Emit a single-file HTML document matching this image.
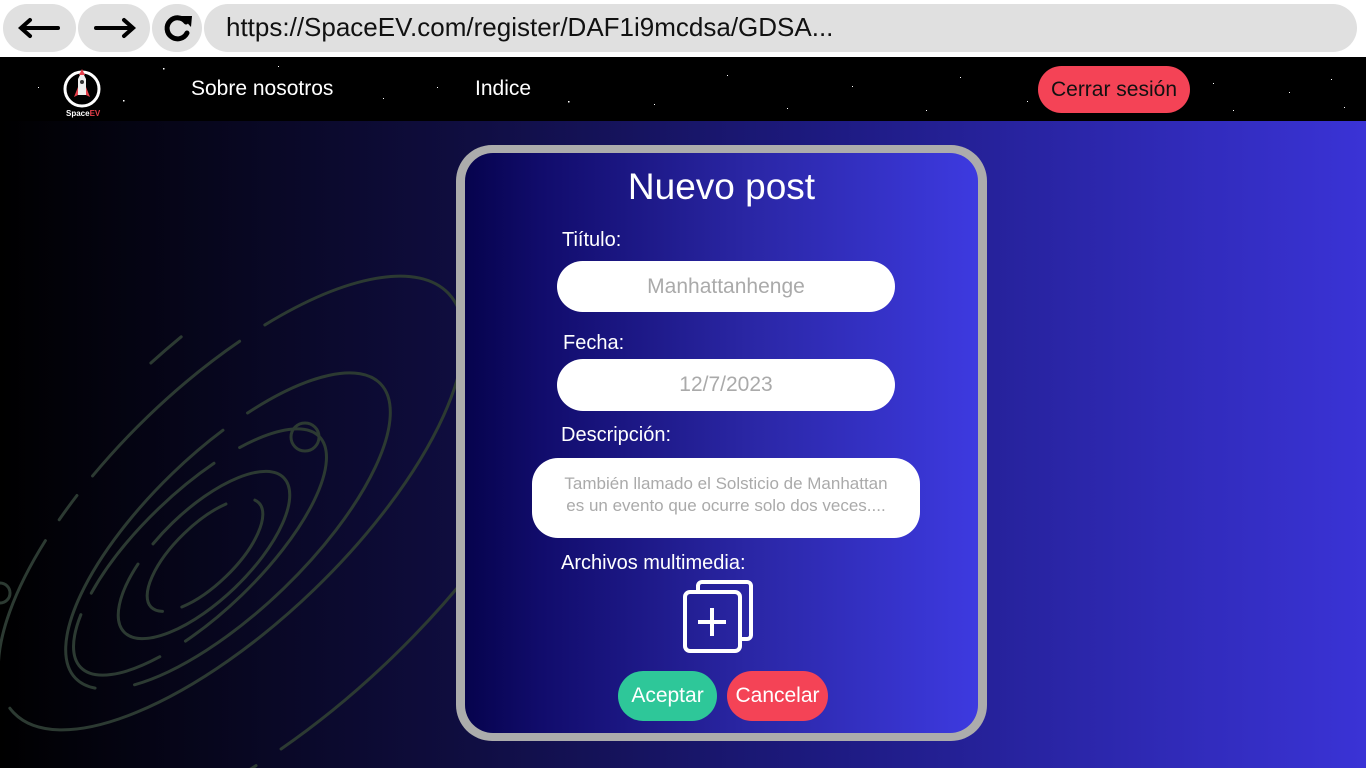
<!DOCTYPE html>
<html><head><meta charset="utf-8"><style>
*{margin:0;padding:0;box-sizing:border-box}
html,body{width:1366px;height:768px;overflow:hidden}
body{font-family:"Liberation Sans","DejaVu Sans",sans-serif;background:#fff;position:relative}
.pill{position:absolute;background:#e0e0e0;border-radius:26px;top:4px;height:48px}
.nav{position:absolute;left:0;top:57px;width:1366px;height:64px;background:#000}
.main{position:absolute;left:0;top:121px;width:1366px;height:647px;background:linear-gradient(90deg,#000 0%,#0f0d3e 33%,#1d1a80 60%,#3a33d6 100%)}
.card{position:absolute;left:456px;top:145px;width:531px;height:596px;background:#acacac;border-radius:36px}
.inner{position:absolute;left:9px;top:8px;width:513px;height:580px;border-radius:28px;background:linear-gradient(90deg,#06034d 0%,#110c6c 15%,#2a26a4 55%,#3d3ae0 100%)}
.abs{position:absolute;white-space:nowrap}
.lbl{position:absolute;color:#fff;font-size:20px;white-space:nowrap}
.inp{position:absolute;background:#fff;border-radius:26px;color:#aaa;text-align:center;white-space:nowrap}
.btn{position:absolute;border-radius:26px;color:#fff;font-size:21px;text-align:center;line-height:50px;height:50px;top:671px}
</style></head><body>
<div class="pill" style="left:3px;width:73px"></div>
<div class="pill" style="left:78px;width:72px"></div>
<div class="pill" style="left:152px;width:50px"></div>
<div class="pill" style="left:204px;width:1153px"></div>
<svg class="abs" style="left:0;top:0" width="210" height="56">
<g stroke="#000" stroke-width="4" fill="none" stroke-linecap="round">
<line x1="22" y1="28" x2="58" y2="28"/><polyline points="30,20 21,28 30,36"/>
<line x1="96" y1="28" x2="132" y2="28"/><polyline points="124,20 133,28 124,36"/>
<path d="M186 22 A10.5 10.5 0 1 0 187 33" stroke-width="5"/>
</g><polygon points="181,16 192,16 191,27" fill="#000"/></svg>
<div class="abs" style="left:226px;top:12px;font-size:26px;color:#111">https://SpaceEV.com/register/DAF1i9mcdsa/GDSA...</div>

<div class="nav">
<svg width="1366" height="64" style="position:absolute;left:0;top:0">
<g fill="#fff"><rect x="38" y="30" width="1" height="1"/><rect x="163" y="11" width="1.5" height="1.5"/><rect x="123" y="43" width="1.5" height="1.5"/><rect x="278" y="9" width="1" height="1"/><rect x="383" y="41" width="1" height="1"/><rect x="437" y="30" width="1" height="1"/><rect x="568" y="44" width="1.5" height="1.5"/><rect x="654" y="47" width="1" height="1"/><rect x="727" y="18" width="1" height="1"/><rect x="787" y="51" width="1" height="1"/><rect x="852" y="29" width="1" height="1"/><rect x="926" y="53" width="1" height="1"/><rect x="1027" y="44" width="1" height="1"/><rect x="1213" y="26" width="1" height="1"/><rect x="1233" y="53" width="1" height="1"/><rect x="1289" y="35" width="1" height="1"/><rect x="1331" y="22" width="1" height="1"/><rect x="1344" y="50" width="1" height="1"/><rect x="960" y="20" width="1" height="1"/></g>
<circle cx="82" cy="32" r="17" fill="#000" stroke="#fff" stroke-width="3"/>
<path d="M82 14 L86 22 L86 38 L78 38 L78 22 Z" fill="#eee"/>
<path d="M82 12 L85 18 L79 18 Z" fill="#e8404c"/>
<path d="M78 30 L74 40 L78 38 Z M86 30 L90 40 L86 38 Z" fill="#e8404c"/>
<circle cx="82" cy="25" r="2" fill="#333"/>
<text x="66" y="59" font-size="8" font-weight="bold" fill="#fff" font-family="Liberation Sans">Space<tspan fill="#e8404c">EV</tspan></text>
</svg>
<div class="abs" style="left:191px;top:20px;color:#fff;font-size:21px">Sobre nosotros</div>
<div class="abs" style="left:475px;top:20px;color:#fff;font-size:21px">Indice</div>
<div class="abs" style="left:1038px;top:9px;width:152px;height:47px;border-radius:24px;background:#f44356;color:#111;font-size:21px;text-align:center;line-height:47px">Cerrar sesión</div>
</div>

<div class="main"></div>
<svg class="abs" style="left:0;top:121px" width="470" height="647">
<g fill="none" stroke="#2c3a32" stroke-width="3" stroke-linecap="round">
<ellipse cx="205" cy="434" rx="75" ry="30" transform="rotate(-44 205 434)" stroke-dasharray="140 20 150 30"/>
<ellipse cx="204" cy="434" rx="111" ry="45" transform="rotate(-44 204 434)" stroke-dasharray="330 25 200 25"/>
<ellipse cx="200" cy="431" rx="166" ry="60" transform="rotate(-44 200 431)" stroke-dasharray="260 30 140 24 180 30 140 40"/>
<ellipse cx="228" cy="410" rx="212" ry="80" transform="rotate(-44 228 410)" stroke-dasharray="420 40 330 30 240 40"/>
<ellipse cx="231" cy="382" rx="302" ry="120" transform="rotate(-44 231 382)" stroke-dasharray="700 40 140 25 30 25 200 30 500"/>
<ellipse cx="260" cy="400" rx="420" ry="190" transform="rotate(-44 260 400)" stroke-dasharray="250 40 350 30 600"/>
</g>
<circle cx="305" cy="316" r="14" fill="none" stroke="#2c3a32" stroke-width="3"/>
<circle cx="0" cy="472" r="10" fill="none" stroke="#2c3a32" stroke-width="3"/>
</svg>

<div class="card"><div class="inner"></div></div>
<div class="abs" style="left:456px;width:531px;top:166px;text-align:center;color:#fff;font-size:37px">Nuevo post</div>
<div class="lbl" style="left:562px;top:229px">Tiítulo:</div>
<div class="inp" style="left:557px;top:261px;width:338px;height:51px;line-height:51px;font-size:21px">Manhattanhenge</div>
<div class="lbl" style="left:563px;top:332px">Fecha:</div>
<div class="inp" style="left:557px;top:359px;width:338px;height:52px;line-height:52px;font-size:21px">12/7/2023</div>
<div class="lbl" style="left:561px;top:424px">Descripción:</div>
<div class="inp" style="left:532px;top:458px;width:388px;height:80px;font-size:17px;line-height:22px;padding-top:15px">También llamado el Solsticio de Manhattan<br>es un evento que ocurre solo dos veces....</div>
<div class="lbl" style="left:561px;top:552px">Archivos multimedia:</div>
<svg class="abs" style="left:680px;top:578px" width="76" height="78">
<g fill="none" stroke="#fff" stroke-width="4" stroke-linejoin="round">
<path d="M18 12 V8 a4 4 0 0 1 4 -4 H67 a4 4 0 0 1 4 4 V57 a4 4 0 0 1 -4 4 H62"/>
<rect x="5" y="14" width="55" height="59" rx="5"/>
<line x1="32" y1="30" x2="32" y2="58"/><line x1="18" y1="44" x2="46" y2="44"/>
</g></svg>
<div class="btn" style="left:618px;width:99px;background:#2ec799">Aceptar</div>
<div class="btn" style="left:727px;width:101px;background:#f44356">Cancelar</div>
</body></html>
